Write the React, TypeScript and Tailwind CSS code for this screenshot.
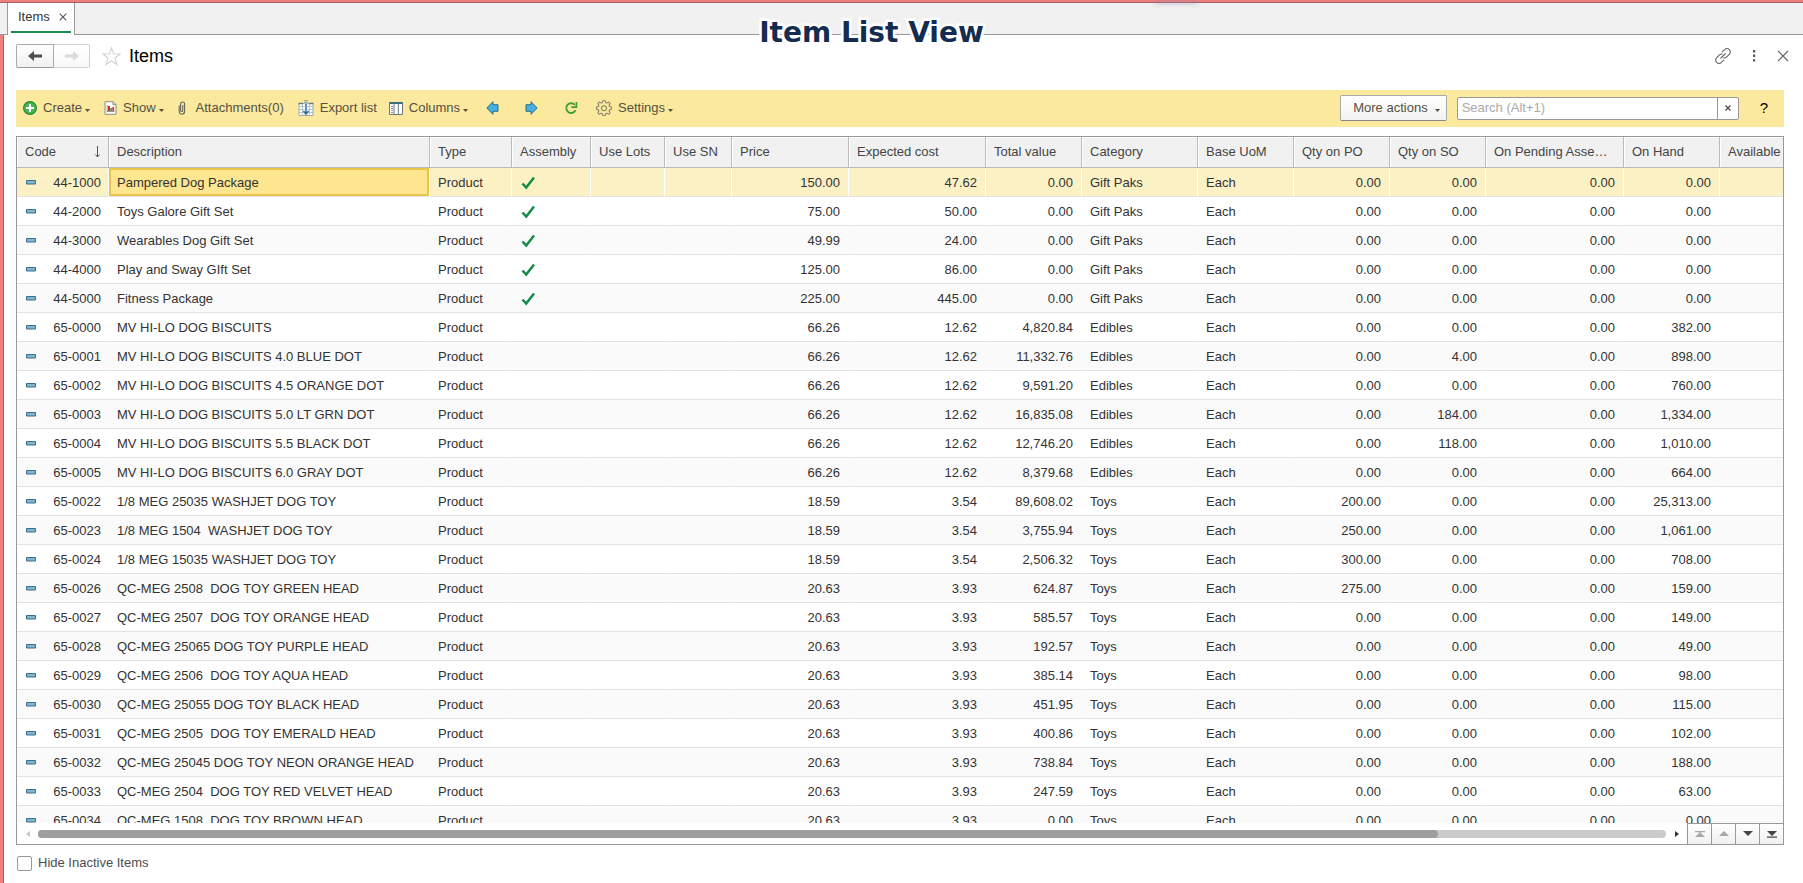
import React, { useState } from 'react';

type Item = {
  code: string;
  description: string;
  assembly?: boolean;
  price: string;
  cost: string;
  total: string;
  category: string;
  onPo: string;
  onSo: string;
  onHand: string;
};

const row = (
  code: string,
  description: string,
  price: string,
  cost: string,
  total: string,
  category: string,
  onPo: string,
  onSo: string,
  onHand: string,
  assembly = false
): Item => ({ code, description, price, cost, total, category, onPo, onSo, onHand, assembly });

const items: Item[] = [
  row('44-1000', 'Pampered Dog Package', '150.00', '47.62', '0.00', 'Gift Paks', '0.00', '0.00', '0.00', true),
  row('44-2000', 'Toys Galore Gift Set', '75.00', '50.00', '0.00', 'Gift Paks', '0.00', '0.00', '0.00', true),
  row('44-3000', 'Wearables Dog Gift Set', '49.99', '24.00', '0.00', 'Gift Paks', '0.00', '0.00', '0.00', true),
  row('44-4000', 'Play and Sway GIft Set', '125.00', '86.00', '0.00', 'Gift Paks', '0.00', '0.00', '0.00', true),
  row('44-5000', 'Fitness Package', '225.00', '445.00', '0.00', 'Gift Paks', '0.00', '0.00', '0.00', true),
  row('65-0000', 'MV HI-LO DOG BISCUITS', '66.26', '12.62', '4,820.84', 'Edibles', '0.00', '0.00', '382.00'),
  row('65-0001', 'MV HI-LO DOG BISCUITS 4.0 BLUE DOT', '66.26', '12.62', '11,332.76', 'Edibles', '0.00', '4.00', '898.00'),
  row('65-0002', 'MV HI-LO DOG BISCUITS 4.5 ORANGE DOT', '66.26', '12.62', '9,591.20', 'Edibles', '0.00', '0.00', '760.00'),
  row('65-0003', 'MV HI-LO DOG BISCUITS 5.0 LT GRN DOT', '66.26', '12.62', '16,835.08', 'Edibles', '0.00', '184.00', '1,334.00'),
  row('65-0004', 'MV HI-LO DOG BISCUITS 5.5 BLACK DOT', '66.26', '12.62', '12,746.20', 'Edibles', '0.00', '118.00', '1,010.00'),
  row('65-0005', 'MV HI-LO DOG BISCUITS 6.0 GRAY DOT', '66.26', '12.62', '8,379.68', 'Edibles', '0.00', '0.00', '664.00'),
  row('65-0022', '1/8 MEG 25035 WASHJET DOG TOY', '18.59', '3.54', '89,608.02', 'Toys', '200.00', '0.00', '25,313.00'),
  row('65-0023', '1/8 MEG 1504  WASHJET DOG TOY', '18.59', '3.54', '3,755.94', 'Toys', '250.00', '0.00', '1,061.00'),
  row('65-0024', '1/8 MEG 15035 WASHJET DOG TOY', '18.59', '3.54', '2,506.32', 'Toys', '300.00', '0.00', '708.00'),
  row('65-0026', 'QC-MEG 2508  DOG TOY GREEN HEAD', '20.63', '3.93', '624.87', 'Toys', '275.00', '0.00', '159.00'),
  row('65-0027', 'QC-MEG 2507  DOG TOY ORANGE HEAD', '20.63', '3.93', '585.57', 'Toys', '0.00', '0.00', '149.00'),
  row('65-0028', 'QC-MEG 25065 DOG TOY PURPLE HEAD', '20.63', '3.93', '192.57', 'Toys', '0.00', '0.00', '49.00'),
  row('65-0029', 'QC-MEG 2506  DOG TOY AQUA HEAD', '20.63', '3.93', '385.14', 'Toys', '0.00', '0.00', '98.00'),
  row('65-0030', 'QC-MEG 25055 DOG TOY BLACK HEAD', '20.63', '3.93', '451.95', 'Toys', '0.00', '0.00', '115.00'),
  row('65-0031', 'QC-MEG 2505  DOG TOY EMERALD HEAD', '20.63', '3.93', '400.86', 'Toys', '0.00', '0.00', '102.00'),
  row('65-0032', 'QC-MEG 25045 DOG TOY NEON ORANGE HEAD', '20.63', '3.93', '738.84', 'Toys', '0.00', '0.00', '188.00'),
  row('65-0033', 'QC-MEG 2504  DOG TOY RED VELVET HEAD', '20.63', '3.93', '247.59', 'Toys', '0.00', '0.00', '63.00'),
  row('65-0034', 'QC-MEG 1508  DOG TOY BROWN HEAD', '20.63', '3.93', '0.00', 'Toys', '0.00', '0.00', '0.00'),
];

const columns = [
  { label: 'Code', width: 'w-[92px]' },
  { label: 'Description', width: 'w-[321px]' },
  { label: 'Type', width: 'w-[82px]' },
  { label: 'Assembly', width: 'w-[79px]' },
  { label: 'Use Lots', width: 'w-[74px]' },
  { label: 'Use SN', width: 'w-[67px]' },
  { label: 'Price', width: 'w-[117px]' },
  { label: 'Expected cost', width: 'w-[137px]' },
  { label: 'Total value', width: 'w-[96px]' },
  { label: 'Category', width: 'w-[116px]' },
  { label: 'Base UoM', width: 'w-[96px]' },
  { label: 'Qty on PO', width: 'w-[96px]' },
  { label: 'Qty on SO', width: 'w-[96px]' },
  { label: 'On Pending Assembly', short: 'On Pending Asse…', width: 'w-[138px]' },
  { label: 'On Hand', width: 'w-[96px]' },
  { label: 'Available', width: 'w-auto' },
];

const Caret = () => (
  <svg width="5" height="3" viewBox="0 0 5 3" className="mt-1 ml-[3px]" fill="currentColor">
    <path d="M0 0h5L2.500 3z" />
  </svg>
);

const CheckMark = () => (
  <svg width="15" height="14" viewBox="0 0 15 14" fill="none" className="ml-px">
    <path d="M1.5 7.5 5.2 11.600 13 1.600" stroke="#178a4a" strokeWidth="2.5" />
  </svg>
);

const CreateIcon = () => (
  <svg width="14" height="14" viewBox="0 0 14 14">
    <circle cx="7" cy="7" r="6.4" fill="#4db356" stroke="#2b8a37" strokeWidth="1.2" />
    <path d="M7 3v8M3 7h8" stroke="#fff" strokeWidth="2" />
  </svg>
);

const ReportIcon = () => (
  <svg width="13" height="14" viewBox="0 0 13 14">
    <path d="M1 .7h8l3 3v9.6H1z" fill="#fff" stroke="#8d8d83" />
    <path d="M9 .7v3h3" fill="none" stroke="#8d8d83" />
    <path d="M3.2 4v7M3 10.5h7.5" stroke="#7a7a7a" strokeWidth=".8" />
    <path d="M4 5h2v5H4z" fill="#c8352c" />
    <path d="M6.200 7h1.800v3H6.200z" fill="#4c9c3e" />
    <path d="M8.3 6h1.8v4H8.3z" fill="#c8352c" />
  </svg>
);

const ClipIcon = () => (
  <svg width="12" height="14" viewBox="0 0 12 14" fill="none" stroke="#66665f" strokeWidth="1.1">
    <path d="M1.200 4.500v6a2.700 2.700 0 0 0 5.400 0V3a2 2 0 0 0-4 0v6.800a1.200 1.200 0 0 0 2.200 0V4" />
  </svg>
);

const ExportIcon = () => (
  <svg width="16" height="16" viewBox="0 0 16 16">
    <path d="M1 3.500h14v12H1z" fill="#fff" stroke="#9aa9ae" />
    <path d="M1 6.500h14M1 9.500h14M1 12.500h14M4.500 3.500v12M11.500 3.500v12" stroke="#a9b7bc" strokeWidth=".8" />
    <path d="M.5 3.500h4.500M11 3.500h4.500" stroke="#5f7d88" strokeWidth="1.400" />
    <path d="M6.300 3h3.400v12H6.300z" fill="#e8f1f5" />
    <path d="M6.500.7h3M6.500 2.700h3" stroke="#4e6a78" strokeWidth="1.200" strokeDasharray="1 1" />
    <path d="M8 3.500v10M5.500 11 8 14.200l2.500-3.200" fill="none" stroke="#2f6b96" strokeWidth="1.400" />
  </svg>
);

const ColumnsIcon = () => (
  <svg width="14" height="13" viewBox="0 0 14 13">
    <path d="M.5.5h13v12H.5z" fill="#fff" stroke="#68777d" />
    <path d="M.5 1h13" stroke="#3f6d80" strokeWidth="2" />
    <path d="M5 2v10M9.3 2v10" stroke="#68777d" />
    <path d="M2 4.5h2M2 6.5h2M2 8.5h2M2 10.5h2" stroke="#8b979b" />
  </svg>
);

const BlueArrow = ({ flip = false }: { flip?: boolean }) => (
  <svg width="13" height="14" viewBox="0 0 13 14" className={flip ? 'rotate-180' : ''}>
    <path d="M.8 7 7 .7v3h5v6.600H7v3z" fill="#45aee3" stroke="#2a7087" strokeWidth="1" strokeLinejoin="round" />
  </svg>
);

const RefreshIcon = () => (
  <svg width="14" height="14" viewBox="0 0 14 14" fill="none">
    <path d="M10.800 3.800A4.900 4.900 0 1 0 11.600 9.200" stroke="#3f9f35" strokeWidth="1.900" />
    <path d="M12.4 1v5.200H7.200" stroke="#3f9f35" strokeWidth="1.700" />
  </svg>
);

const GearIcon = () => (
  <svg width="16" height="16" viewBox="0 0 16 16" fill="none" stroke="#8d866b" strokeWidth="1.1" strokeLinejoin="round">
    <path d="M6.800.7h2.400l.4 1.900 1.300.5 1.700-1.100 1.600 1.600-1.100 1.700.5 1.300 1.800.4v2.400l-1.800.4-.5 1.300 1.100 1.700-1.600 1.600-1.700-1.100-1.300.5-.4 1.800H6.800l-.4-1.800-1.300-.5-1.700 1.100-1.600-1.600 1.100-1.700-.5-1.300L.6 9.400V7l1.800-.4.5-1.300-1.100-1.700L3.400 2l1.700 1.100 1.300-.5z" />
    <circle cx="8" cy="8.200" r="2.500" />
  </svg>
);

const ToolButton = ({ icon, label, menu, gap = 'mr-[14px]' }: { icon: React.ReactNode; label: string; menu?: boolean; gap?: string }) => (
  <button className={`flex items-center ${gap}`}>
    {icon}
    <span className="ml-[6px]">{label}</span>
    {menu && <Caret />}
  </button>
);

export default function App() {
  const [selected, setSelected] = useState('44-1000');
  const [search, setSearch] = useState('');
  const [hideInactive, setHideInactive] = useState(false);

  return (
    <div className="flex min-h-screen flex-col bg-white font-['Liberation_Sans',Arial,sans-serif] text-[13px] leading-4 text-[#333]">
      {/* Window top edge */}
      <div className="relative h-[3px] border-b border-[#a8605e] bg-[#ee817e]">
        <div className="absolute top-0 left-[64%] z-10 h-1 w-11 rounded-full bg-[#8f7fae]/40 blur-[2px]"></div>
      </div>

      {/* Tab strip */}
      <div className="relative flex h-8 border-b border-[#999] bg-[#f1f1f1] pl-[7px]">
        <div className="flex h-8 items-stretch border-x border-[#999] bg-white px-[3px]">
          <div className="mb-[2px] flex items-center gap-[9px] border-b-2 border-[#1c8a51] pr-1 pl-[7px]">
            <a href="#items">Items</a>
            <button aria-label="Close tab">
              <svg width="8" height="8" viewBox="0 0 8 8" stroke="#555" strokeWidth="1.1">
                <path d="M.7.7l6.6 6.6M7.3.7.7 7.3" />
              </svg>
            </button>
          </div>
        </div>
        <h1 className="absolute inset-x-0 top-[14px] pr-[60px] text-center font-['DejaVu_Sans',Verdana,sans-serif] text-[28px] leading-8 font-bold text-[#142c50] [paint-order:stroke_fill] [-webkit-text-stroke:5px_white]">
          Item List View
        </h1>
      </div>

      <div className="flex grow flex-col border-l-3 border-[#ee817e]">
        <div className="flex grow flex-col border-l border-[#a8605e] pr-[19px] pl-3">
          {/* Form header */}
          <div className="flex h-[55px] items-start pt-[9px]">
            <div className="flex h-6">
              <button aria-label="Back" className="flex w-[38px] items-center justify-center rounded-l-xs border border-[#aaa] border-b-[#999] bg-linear-to-b from-white to-[#f0f0f0]">
                <svg width="14" height="10" viewBox="0 0 14 10" fill="#4d4d4d">
                  <path d="M0 5 6 0v3.6h8v2.8H6V10z" />
                </svg>
              </button>
              <button aria-label="Forward" disabled className="flex w-9 items-center justify-center rounded-r-xs border border-l-0 border-[#d0d0d0] bg-linear-to-b from-white to-[#f8f8f8]">
                <svg width="14" height="10" viewBox="0 0 14 10" fill="#dadada">
                  <path d="M14 5 8 0v3.6H0v2.8h8V10z" />
                </svg>
              </button>
            </div>
            <button aria-label="Favorite" className="mt-[3px] ml-3">
              <svg width="19" height="19" viewBox="0 0 19 19" fill="none" stroke="#d2d2d2" strokeWidth="1.1">
                <path d="M9.5 1l2.2 6h6.300l-5 4 1.900 6.600L9.500 13.700 4.100 17.600 6 11 1 7h6.300z" />
              </svg>
            </button>
            <h2 className="ml-2 text-[18px] leading-6 text-black">Items</h2>
            <div className="mt-[4px] -mr-[5px] ml-auto flex items-center gap-4">
              <button aria-label="Copy link">
                <svg width="16" height="16" viewBox="0 0 16 16" fill="none" stroke="#666" strokeWidth="1.1">
                  <path d="M7 4.200 9.600 1.600a3.200 3.200 0 0 1 4.700 0 3.200 3.200 0 0 1 0 4.700L11.500 9.100a3.200 3.200 0 0 1-3 .8" />
                  <path d="M9 11.800 6.400 14.400a3.200 3.200 0 0 1-4.700 0 3.200 3.200 0 0 1 0-4.700L4.500 6.900a3.200 3.200 0 0 1 3-.8M5.500 10.500l5-5" />
                </svg>
              </button>
              <button aria-label="More">
                <svg width="14" height="14" viewBox="0 0 14 14" fill="#555">
                  <path d="M6 1h2.200v2.400H6zM6 5.600h2.200V8H6zM6 10.200h2.200v2.400H6z" />
                </svg>
              </button>
              <button aria-label="Close">
                <svg width="12" height="12" viewBox="0 0 12 12" stroke="#666" strokeWidth="1.1">
                  <path d="M1 1l10 10M11 1 1 11" />
                </svg>
              </button>
            </div>
          </div>

          {/* Command bar */}
          <div className="flex h-[37px] items-center bg-[#fbe99e] pb-px pl-[7px] text-[#555042]">
            <ToolButton icon={<CreateIcon />} label="Create" menu />
            <ToolButton icon={<ReportIcon />} label="Show" menu />
            <ToolButton icon={<ClipIcon />} label="Attachments(0)" />
            <ToolButton icon={<ExportIcon />} label="Export list" gap="mr-3" />
            <ToolButton icon={<ColumnsIcon />} label="Columns" menu gap="mr-[18px]" />
            <button aria-label="Previous" className="mr-[26px]"><BlueArrow /></button>
            <button aria-label="Next" className="mr-[26px]"><BlueArrow flip /></button>
            <button aria-label="Refresh" className="mr-[18px]"><RefreshIcon /></button>
            <ToolButton icon={<GearIcon />} label="Settings" menu />

            <button className="ml-auto flex h-[26px] items-center rounded-xs border border-[#aaa] border-b-[#888] bg-linear-to-b from-white to-[#f2f2f2] pr-[6px] pl-3">
              More actions
              <span className="ml-1"><Caret /></span>
            </button>
            <div className="ml-[10px] flex h-[23px] w-[282px] rounded-xs border border-[#999] bg-white">
              <input
                aria-label="Search"
                placeholder="Search (Alt+1)"
                value={search}
                onChange={(e) => setSearch(e.target.value)}
                className="min-w-0 grow pl-1 outline-none placeholder:text-[#aaa]"
              />
              <button aria-label="Clear search" onClick={() => setSearch('')} className="flex w-[21px] items-center justify-center border-l border-[#999]">
                <svg width="6" height="6" viewBox="0 0 6 6" stroke="#444" strokeWidth="1.1">
                  <path d="M.5.5l5 5M5.500.5l-5 5" />
                </svg>
              </button>
            </div>
            <button aria-label="Help" className="mr-4 ml-[21px] text-[15px] text-black">?</button>
          </div>

          {/* Item table */}
          <div className="mt-[9px] border border-[#999]">
            <div className="h-[686px] overflow-hidden">
              <table className="w-full table-fixed border-separate border-spacing-0">
                <thead>
                  <tr className="h-[31px]">
                    {columns.map((c, i) => (
                      <th
                        key={c.label}
                        title={c.label}
                        className={`${c.width} overflow-hidden border-b border-[#bbb] bg-[#f1f1f1] pl-2 text-left font-normal whitespace-nowrap text-[#444] shadow-[inset_1px_1px_0_#fff] ${i < columns.length - 1 ? 'border-r' : ''}`}
                      >
                        {i === 0 ? (
                          <span className="flex items-center justify-between pr-[7px]">
                            {c.label}
                            <svg width="7" height="12" viewBox="0 0 7 12" fill="none" stroke="#555">
                              <path d="M3.500 0v11M1.500 8.500l2 2.500 2-2.500" />
                            </svg>
                          </span>
                        ) : (
                          c.short ?? c.label
                        )}
                      </th>
                    ))}
                  </tr>
                </thead>
                <tbody>
                  {items.map((item, i) => {
                    const active = item.code === selected;
                    const cell = `border-r pt-px pl-2 ${active ? 'border-r-white' : 'border-r-transparent'}`;
                    const num = `${cell} pr-2 text-right`;
                    return (
                      <tr
                        key={item.code}
                        onClick={() => setSelected(item.code)}
                        className={`h-[29px] whitespace-pre *:border-b *:border-b-[#e2e2e2] ${active ? 'bg-[#fcf1c5]' : i % 2 ? 'bg-white' : 'bg-[#fafafa]'}`}
                      >
                        <td className={cell}>
                          <span className="flex items-center justify-between pr-[7px]">
                            <svg width="12" height="5" viewBox="0 0 12 5">
                              <path d="M1.500.5h9v3.500h-9z" fill="#83b4cc" stroke="#3d6f8c" />
                            </svg>
                            {item.code}
                          </span>
                        </td>
                        <td className={`${cell} ${active ? 'bg-[#fee58f] shadow-[inset_0_0_0_2px_#e9c64a]' : ''}`}>{item.description}</td>
                        <td className={cell}>Product</td>
                        <td className={cell}>{item.assembly && <CheckMark />}</td>
                        <td className={cell}></td>
                        <td className={cell}></td>
                        <td className={num}>{item.price}</td>
                        <td className={num}>{item.cost}</td>
                        <td className={num}>{item.total}</td>
                        <td className={cell}>{item.category}</td>
                        <td className={cell}>Each</td>
                        <td className={num}>{item.onPo}</td>
                        <td className={num}>{item.onSo}</td>
                        <td className={num}>0.00</td>
                        <td className={num}>{item.onHand}</td>
                        <td></td>
                      </tr>
                    );
                  })}
                </tbody>
              </table>
            </div>

            {/* Horizontal scroll bar and row navigation */}
            <div className="flex h-[21px] items-stretch">
              <button aria-label="Scroll left" className="flex w-[21px] items-center justify-end pr-[8px]">
                <svg width="4" height="6" viewBox="0 0 4 6" fill="#c4c4c4"><path d="M4 0v6L0 3z" /></svg>
              </button>
              <div className="my-auto h-2 grow rounded-full bg-[#cbcbcb]">
                <div className="h-2 w-[86%] rounded-full bg-[#9e9e9e]"></div>
              </div>
              <button aria-label="Scroll right" className="flex w-[21px] items-center pl-[9px]">
                <svg width="4" height="6" viewBox="0 0 4 6" fill="#333"><path d="M0 0v6l4-3z" /></svg>
              </button>
              <div className="flex *:flex *:w-[24px] *:items-center *:justify-center *:border-t *:border-l *:border-[#999] *:bg-linear-to-b *:from-white *:to-[#f0f0f0]">
                <button aria-label="First row" disabled>
                  <svg width="10" height="7" viewBox="0 0 10 7" fill="#a8a8a8"><path d="M0 0h10v1.200H0zM5 1l5 5H0z" /></svg>
                </button>
                <button aria-label="Previous row" disabled>
                  <svg width="10" height="6" viewBox="0 0 10 6" fill="#a8a8a8"><path d="M5 0l5 5H0z" /></svg>
                </button>
                <button aria-label="Next row">
                  <svg width="10" height="6" viewBox="0 0 10 6" fill="#444"><path d="M0 0h10L5 5z" /></svg>
                </button>
                <button aria-label="Last row">
                  <svg width="10" height="7" viewBox="0 0 10 7" fill="#444"><path d="M0 0h10L5 5zM0 5.500h10v1.200H0z" /></svg>
                </button>
              </div>
            </div>
          </div>

          <label className="mt-[10px] flex items-center gap-[6px] self-start pl-px text-[#4d4d4d]">
            <input
              type="checkbox"
              checked={hideInactive}
              onChange={(e) => setHideInactive(e.target.checked)}
              className="size-[15px] appearance-none rounded-xs border border-[#999] bg-white checked:bg-[#1c8a51]"
            />
            Hide Inactive Items
          </label>
        </div>
      </div>
    </div>
  );
}
